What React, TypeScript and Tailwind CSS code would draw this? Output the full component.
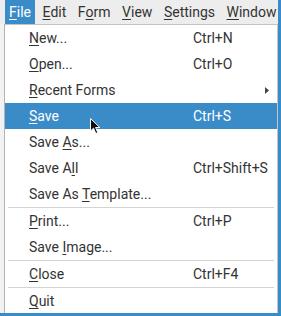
import React from 'react'

type Item =
  | { sep: true }
  | { sep?: false; label: React.ReactNode; shortcut?: string; sub?: boolean; active?: boolean }

const u = (c: string) => <span className="underline underline-offset-2 decoration-1">{c}</span>

const items: Item[] = [
  { label: <>{u('N')}ew...</>, shortcut: 'Ctrl+N' },
  { label: <>{u('O')}pen...</>, shortcut: 'Ctrl+O' },
  { label: <>{u('R')}ecent Forms</>, sub: true },
  { label: <>{u('S')}ave</>, shortcut: 'Ctrl+S', active: true },
  { label: <>Save {u('A')}s...</> },
  { label: <>Save A{u('l')}l</>, shortcut: 'Ctrl+Shift+S' },
  { label: <>Save As {u('T')}emplate...</> },
  { sep: true },
  { label: <>{u('P')}rint...</>, shortcut: 'Ctrl+P' },
  { label: <>Save {u('I')}mage...</> },
  { sep: true },
  { label: <>{u('C')}lose</>, shortcut: 'Ctrl+F4' },
  { sep: true },
  { label: <>{u('Q')}uit</> },
]

const menus: React.ReactNode[] = [
  <>{u('F')}ile</>,
  <>{u('E')}dit</>,
  <>F{u('o')}rm</>,
  <>{u('V')}iew</>,
  <>{u('S')}ettings</>,
  <>{u('W')}indow</>,
]

export default function App() {
  return (
    <div
      className="relative w-[281px] h-[316px] overflow-hidden bg-[#ededed] text-[14px] text-[#333333] flex flex-col border-r-[3px] border-b-[3px] border-[#3a8cc8]"
      style={{ fontFamily: 'Roboto, "Liberation Sans", sans-serif' }}
    >
      {/* menu bar */}
      <div className="h-[24px] shrink-0 flex items-stretch pl-[5px]">
        {menus.map((m, i) => (
          <div
            key={i}
            className={`flex items-center px-[4px] mr-[3.5px] ${i === 0 ? 'bg-[#3a8cc8] text-white' : ''}`}
          >
            {m}
          </div>
        ))}
      </div>

      <div className="flex flex-1 min-h-0">
        <div className="w-[5px] shrink-0 border-r border-[#b4b4b4] bg-[#f2f2f2]" />
        {/* dropdown */}
        <div className="flex-1 bg-white border-r border-t border-[#c4c4c4] flex flex-col">
          {items.map((it, i) =>
            it.sep ? (
              <div key={i} className="h-px mx-[3px] bg-[#d4d4d4] shrink-0" />
            ) : (
              <div
                key={i}
                className={`h-[26px] shrink-0 flex items-center pl-[24px] pr-[6px] ${
                  it.active ? 'bg-[#3a8cc8] text-white' : ''
                }`}
              >
                <span className="w-[164px] shrink-0 whitespace-nowrap">{it.label}</span>
                <span className="flex-1 whitespace-nowrap">{it.shortcut}</span>
                {it.sub && (
                  <svg width="5" height="7" viewBox="0 0 5 7" className="mr-[1px]">
                    <path d="M0 0 L4 3.5 L0 7 Z" fill="#444" />
                  </svg>
                )}
              </div>
            )
          )}
        </div>
      </div>

      {/* mouse cursor */}
      <svg className="absolute left-[90px] top-[118px]" width="12" height="17" viewBox="0 0 12 17">
        <path d="M0.5 0.5 L0.5 13 L3.5 10.2 L5.8 15.5 L7.8 14.6 L5.6 9.5 L9.8 9.5 Z" fill="#111" stroke="#fff" strokeWidth="1" />
      </svg>
    </div>
  )
}
